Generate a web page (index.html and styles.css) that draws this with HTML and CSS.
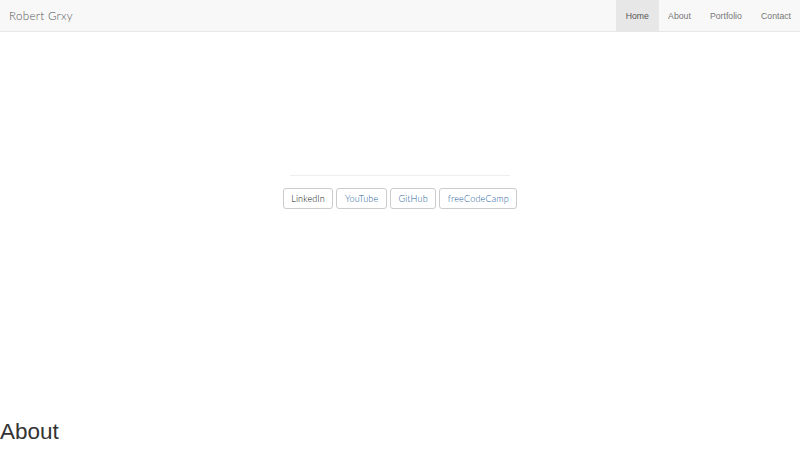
FILE: index.html
```html
<!DOCTYPE html>
<html>
<head>
<meta charset="utf-8">
<link rel="stylesheet" href="styles.css">
</head>
<body>
<nav class="navbar">
  <a class="brand" href="#">Robert Grxy</a>
  <ul class="nav">
    <li class="active"><a href="#">Home</a></li>
    <li><a href="#">About</a></li>
    <li><a href="#">Portfolio</a></li>
    <li><a href="#">Contact</a></li>
  </ul>
</nav>
<section class="hero">
  <hr class="divider">
  <div class="links">
    <a class="btn btn-dark" href="#">LinkedIn</a>
    <a class="btn" href="#">YouTube</a>
    <a class="btn" href="#">GitHub</a>
    <a class="btn" href="#">freeCodeCamp</a>
  </div>
</section>
<h1 class="section-title">About</h1>
</body>
</html>
```
FILE: styles.css
```css
html, body {
  margin: 0;
  padding: 0;
  background: #fff;
  font-family: "Liberation Sans", Arial, sans-serif;
  color: #333;
}
.navbar {
  display: flex;
  justify-content: space-between;
  align-items: stretch;
  height: 31px;
  background: #f8f8f8;
  border-bottom: 1px solid #e7e7e7;
}
.brand {
  display: flex;
  align-items: center;
  padding-left: 9px;
  font-family: "Lato", "Open Sans", sans-serif;
  font-size: 11.6px;
  font-weight: 300;
  color: #555;
  text-decoration: none;
  letter-spacing: 0.3px;
}
.nav {
  display: flex;
  list-style: none;
  margin: 0;
  padding: 0;
}
.nav li a {
  display: flex;
  align-items: center;
  height: 31px;
  padding: 0 9.6px;
  font-size: 8.7px;
  color: #777;
  text-decoration: none;
}
.nav li.active a {
  background: #e7e7e7;
  color: #555;
}
.nav li:last-child a {
  padding-right: 9px;
}
.hero {
  display: flex;
  flex-direction: column;
  align-items: center;
  padding-top: 143px;
  height: 240px;
}
.divider {
  width: 220px;
  margin: 0;
  border: 0;
  border-top: 1px solid #eee;
}
.links {
  display: flex;
  gap: 3px;
  margin-top: 12px;
}
.btn {
  display: block;
  box-sizing: border-box;
  height: 21px;
  line-height: 19px;
  padding: 0 7.5px;
  border: 1px solid #ccc;
  border-radius: 3px;
  font-family: "Lato", "Open Sans", sans-serif;
  font-size: 9.1px;
  font-weight: 300;
  letter-spacing: 0.15px;
  color: #1f5f99;
  text-decoration: none;
  background: #fff;
}
.btn-dark {
  color: #111;
}
.section-title {
  margin: 0;
  padding-top: 5px;
  font-size: 22.5px;
  font-weight: 500;
  color: #333;
  line-height: 1.1;
}
```
